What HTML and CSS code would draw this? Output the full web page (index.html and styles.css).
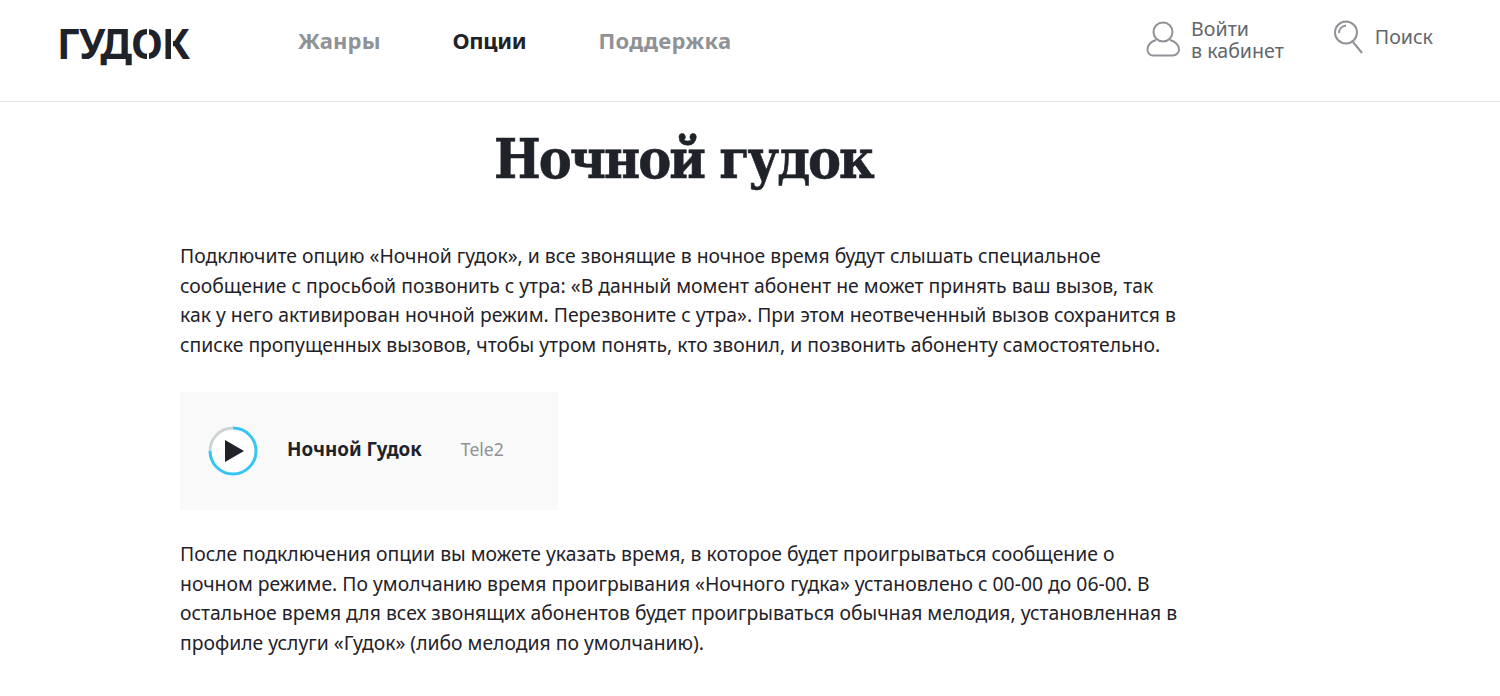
FILE: index.html
```html
<!DOCTYPE html>
<html lang="ru">
<head>
    <meta charset="UTF-8">
    <title>Ночной гудок</title>
    <link rel="stylesheet" href="styles.css">
</head>
<body>
    <header class="site-header">
        <a class="logo" href="#">ГУДОК</a>
        <nav class="main-nav">
            <a href="#">Жанры</a>
            <a href="#" class="active">Опции</a>
            <a href="#">Поддержка</a>
        </nav>
        <div class="header-tools">
            <a class="tool tool-login" href="#">
                <svg class="tool-icon" width="36" height="36" viewBox="0 0 36 36">
                    <circle cx="18" cy="11" r="9.500"></circle>
                    <path d="M11 19C5 21 2.500 25 2.500 28.500 2.500 32 5 34.500 8 34.500H28C31 34.500 34 32 34 28.500 34 25 31 21 25 19"></path>
                </svg>
                <span>Войти<br>в кабинет</span>
            </a>
            <a class="tool tool-search" href="#">
                <svg class="tool-icon" width="30" height="36" viewBox="0 0 30 36">
                    <circle cx="12" cy="13.500" r="11"></circle>
                    <path d="M5 14C5 10 8 7 12 6.500"></path>
                    <path d="M19 23l9 11"></path>
                </svg>
                <span>Поиск</span>
            </a>
        </div>
    </header>

    <main class="content">
        <h1>Ночной гудок</h1>
        <p>Подключите опцию «Ночной гудок», и все звонящие в ночное время будут слышать специальное сообщение с просьбой позвонить с утра: «В данный момент абонент не может принять ваш вызов, так как у него активирован ночной режим. Перезвоните с утра». При этом неотвеченный вызов сохранится в списке пропущенных вызовов, чтобы утром понять, кто звонил, и позвонить абоненту самостоятельно.</p>

        <div class="player">
            <button class="play-btn">
                <svg width="50" height="50" viewBox="0 0 50 50">
                    <circle class="ring-bg" cx="25" cy="25" r="25"></circle>
                    <path class="ring" d="M25 2A23 23 0 1 1 2 25"></path>
                    <path class="ring-track" d="M2 25A23 23 0 0 1 25 2"></path>
                    <path class="triangle" d="M17 14l19 11-19 11z"></path>
                </svg>
            </button>
            <span class="track-name">Ночной Гудок</span>
            <span class="track-author">Tele2</span>
        </div>

        <p>После подключения опции вы можете указать время, в которое будет проигрываться сообщение о ночном режиме. По умолчанию время проигрывания «Ночного гудка» установлено с 00-00 до 06-00. В остальное время для всех звонящих абонентов будет проигрываться обычная мелодия, установленная в профиле услуги «Гудок» (либо мелодия по умолчанию).</p>
    </main>
</body>
</html>
```

FILE: styles.css
```css
body {
    margin: 0;
    background-color: #fff;
    color: #1f2229;
    font-family: 'Noto Sans', sans-serif;
    overflow: hidden;
}

a { text-decoration: none; color: inherit; }

.site-header {
    display: flex;
    align-items: center;
    height: 101px;
    border-bottom: 1px solid #e2e3e4;
    padding: 0 67px 0 57px;
}

.logo {
    position: relative;
    width: 241px;
    font-size: 41px;
    font-weight: 700;
    letter-spacing: -1px;
    line-height: 1;
    margin-top: -14px;
}

/* stencil cuts in the logo letters */
.logo::before,
.logo::after {
    content: "";
    position: absolute;
    top: 0;
    height: 100%;
    width: 2px;
    background-color: #fff;
}
.logo::before { left: 90px; }
.logo::after { left: 114px; }

.main-nav { display: flex; gap: 72px; margin-top: -22px; }
.main-nav a { font-size: 22px; font-weight: 700; color: #8f9296; letter-spacing: 0.1px; }
.main-nav a.active { color: #1f2229; letter-spacing: -0.3px; }
.main-nav a:last-child { letter-spacing: 0.3px; }

.header-tools { display: flex; gap: 50px; margin-left: auto; margin-top: -22px; }
.tool { display: flex; align-items: center; gap: 10px; font-size: 19.600px; line-height: 22px; color: #63666b; }
.tool-icon { fill: none; stroke: #8f9296; stroke-width: 2; }
.tool-login .tool-icon { margin-top: -2px; }
.tool-search { margin-top: -6px; gap: 11px; }

.content { width: 1000px; margin-left: 180px; }

h1 {
    font-family: 'DejaVu Serif Condensed', 'DejaVu Serif', serif;
    font-stretch: condensed;
    font-size: 55px;
    font-weight: 700;
    letter-spacing: -2px;
    line-height: 60px;
    margin: 27px 0 52px;
    padding-left: 314px;
    -webkit-text-stroke: 0.6px #1f2229;
}

p { font-size: 19.350px; line-height: 29.700px; margin: 0; }

.player {
    display: flex;
    align-items: center;
    width: 378px;
    height: 118px;
    background-color: #f9f9f9;
    margin: 32px 0 29px;
    padding-left: 28px;
    box-sizing: border-box;
}

.play-btn { border: 0; padding: 0; background: none; width: 50px; height: 50px; }
.ring-bg { fill: #fff; stroke: none; }
.ring { fill: none; stroke: #35c5f0; stroke-width: 3; }
.ring-track { fill: none; stroke: #ccd4d4; stroke-width: 3; }
.triangle { fill: #1f2229; }

.track-name { font-size: 18.800px; font-weight: 700; margin: -4px 0 0 29px; }
.track-author { font-size: 17.600px; color: #8f9296; margin: -4px 0 0 39px; }
```
